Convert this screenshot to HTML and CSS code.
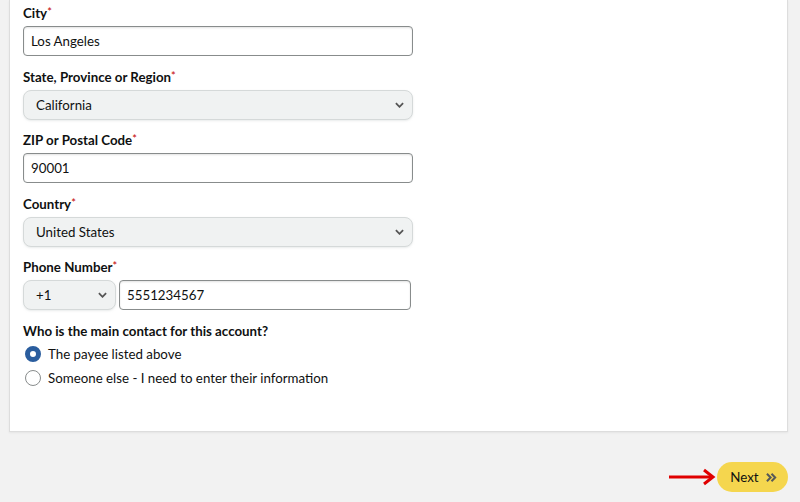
FILE: index.html
```html
<!DOCTYPE html>
<html>
<head>
<meta charset="utf-8">
<link rel="stylesheet" href="styles.css">
</head>
<body>
<div class="page">
  <div class="card">
    <div class="field">
      <div class="label">City<span class="req">*</span></div>
      <div class="input">Los Angeles</div>
    </div>
    <div class="field">
      <div class="label">State, Province or Region<span class="req">*</span></div>
      <div class="select"><span>California</span><svg class="chev" viewBox="0 0 10 6"><path d="M1 1 L5 5 L9 1" fill="none" stroke="#555" stroke-width="2"/></svg></div>
    </div>
    <div class="field">
      <div class="label">ZIP or Postal Code<span class="req">*</span></div>
      <div class="input">90001</div>
    </div>
    <div class="field">
      <div class="label">Country<span class="req">*</span></div>
      <div class="select"><span>United States</span><svg class="chev" viewBox="0 0 10 6"><path d="M1 1 L5 5 L9 1" fill="none" stroke="#555" stroke-width="2"/></svg></div>
    </div>
    <div class="field">
      <div class="label">Phone Number<span class="req">*</span></div>
      <div class="phone">
        <div class="select code"><span>+1</span><svg class="chev" viewBox="0 0 10 6"><path d="M1 1 L5 5 L9 1" fill="none" stroke="#555" stroke-width="2"/></svg></div>
        <div class="input num">5551234567</div>
      </div>
    </div>
    <div class="question">Who is the main contact for this account?</div>
    <div class="radio-row"><span class="radio checked"></span><span>The payee listed above</span></div>
    <div class="radio-row"><span class="radio"></span><span>Someone else - I need to enter their information</span></div>
  </div>
  <div class="actions">
    <svg class="arrow" viewBox="0 0 48 20"><path d="M1 10 H44" stroke="#e00000" stroke-width="3"/><path d="M36 3 L45 10 L36 17" fill="none" stroke="#e00000" stroke-width="3"/></svg>
    <div class="next">Next <svg class="dchev" viewBox="0 0 14 12"><path d="M2 2 L6 6 L2 10 M7 2 L11 6 L7 10" fill="none" stroke="#565959" stroke-width="2.2"/></svg></div>
  </div>
</div>
</body>
</html>
```
FILE: styles.css
```css
html, body {
  margin: 0;
  padding: 0;
  background: #f2f2f2;
  font-family: Lato, "Liberation Sans", Arial, sans-serif;
  color: #0f1111;
  font-size: 13.3px;
}
.page {
  width: 800px;
  height: 502px;
  overflow: hidden;
}
.card {
  margin-left: 9px;
  width: 779px;
  box-sizing: border-box;
  background: #fff;
  border: 1px solid #dddddd;
  border-top: none;
  box-shadow: 0 1px 2px rgba(0,0,0,0.06);
  padding: 5px 14px 41px 13px;
}
.field {
  margin-bottom: 12.5px;
}
.label {
  font-weight: 700;
  font-size: 13.3px;
  line-height: 17px;
  margin-bottom: 4px;
}
.req {
  color: #c40000;
  font-weight: 400;
  font-size: 11px;
  vertical-align: top;
  line-height: 14px;
}
.input {
  width: 390px;
  height: 30px;
  box-sizing: border-box;
  border: 1px solid #888c8c;
  border-radius: 4px;
  padding: 0 7px;
  display: flex;
  align-items: center;
  box-shadow: inset 0 1px 2px rgba(15,17,17,0.12);
}
.select {
  width: 390px;
  height: 30px;
  box-sizing: border-box;
  border: 1px solid #d5d9d9;
  background: #f0f2f2;
  border-radius: 8px;
  padding: 0 8px 0 12px;
  display: flex;
  align-items: center;
  justify-content: space-between;
  box-shadow: 0 1px 2px rgba(213,217,217,0.5);
}
.chev {
  width: 9px;
  height: 6px;
}
.phone {
  display: flex;
  gap: 3px;
}
.select.code {
  width: 93px;
}
.input.num {
  width: 292px;
}
.question {
  font-weight: 700;
  font-size: 13.3px;
  line-height: 17px;
  margin-bottom: 2.5px;
}
.radio-row {
  height: 24px;
  display: flex;
  align-items: center;
  gap: 7px;
  padding-left: 2px;
}
.radio {
  width: 16px;
  height: 16px;
  box-sizing: border-box;
  border-radius: 50%;
  border: 1px solid #888c8c;
  background: #fff;
}
.radio.checked {
  border: 5px solid #2a5d9e;
  background: #fff;
}
.actions {
  display: flex;
  justify-content: flex-end;
  align-items: center;
  margin-top: 30px;
  padding-right: 12px;
  gap: 1px;
}
.arrow {
  width: 48px;
  height: 20px;
}
.next {
  width: 71px;
  height: 30px;
  box-sizing: border-box;
  border-radius: 15px;
  background: #f5d64e;
  display: flex;
  align-items: center;
  justify-content: center;
  gap: 6px;
  padding-left: 3px;
}
.dchev {
  width: 13px;
  height: 11px;
}
```
